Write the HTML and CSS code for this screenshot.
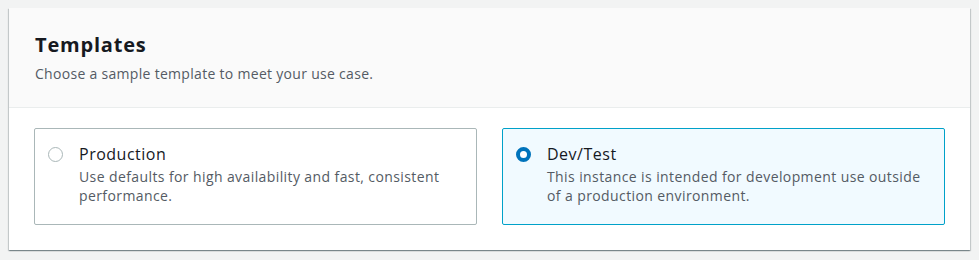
FILE: index.html
```html
<!DOCTYPE html>
<html>
<head>
    <title>Templates</title>
    <meta charset="UTF-8">
    <meta name="viewport" content="width=device-width, initial-scale=1.0">
    <link rel="stylesheet" href="styles.css">
</head>
<body>
    <div class="container">
        <div class="header">
            <h2>Templates</h2>
            <p class="desc">Choose a sample template to meet your use case.</p>
        </div>

        <div class="content">
            <div class="tiles">
                <label class="tile">
                    <input type="radio" name="template" value="production">
                    <span class="radio"></span>
                    <span class="tile-text">
                        <span class="tile-title">Production</span>
                        <span class="tile-desc">Use defaults for high availability and fast, consistent performance.</span>
                    </span>
                </label>

                <label class="tile">
                    <input type="radio" name="template" value="devtest" checked>
                    <span class="radio"></span>
                    <span class="tile-text">
                        <span class="tile-title">Dev/Test</span>
                        <span class="tile-desc">This instance is intended for development use outside of a production environment.</span>
                    </span>
                </label>
            </div>
        </div>
    </div>
</body>
</html>
```

FILE: styles.css
```css
* {
    box-sizing: border-box;
    margin: 0;
    padding: 0;
}

body {
    font-family: 'Open Sans', 'Noto Sans', sans-serif;
    background-color: #f2f3f3;
    color: #16191f;
    padding: 8px 9px;
}

.container {
    background: #fff;
    box-shadow: 0 1px 1px 0 rgba(0, 28, 36, 0.3),
                1px 1px 1px 0 rgba(0, 28, 36, 0.15),
                -1px 1px 1px 0 rgba(0, 28, 36, 0.15);
}

.header {
    background: #fafafa;
    border-bottom: 1px solid #eaeded;
    padding: 23px 26px 20px;
    height: 100px;
}

h2 {
    font-size: 20px;
    font-weight: 700;
    line-height: 28px;
    letter-spacing: 0.8px;
    color: #16191f;
}

.desc {
    font-size: 14px;
    line-height: 22px;
    letter-spacing: 0.3px;
    color: #545b64;
    margin-top: 4px;
}

.content {
    padding: 20px 25px 25px;
}

.tiles {
    display: grid;
    grid-template-columns: 1fr 1fr;
    gap: 25px;
}

.tile {
    display: flex;
    align-items: flex-start;
    gap: 16px;
    border: 1px solid #aab7b8;
    border-radius: 2px;
    padding: 13px 13px 19px;
    height: 97px;
    cursor: pointer;
}

.tile input {
    display: none;
}

.radio {
    flex: none;
    width: 15px;
    height: 15px;
    margin-top: 5px;
    border-radius: 50%;
    border: 1.5px solid #aab7b8;
    background: #fff;
}

.tile:has(input:checked) {
    border-color: #00a1c9;
    background: #f1faff;
}

.tile input:checked + .radio {
    border: 4px solid #0073bb;
}

.tile-text {
    display: flex;
    flex-direction: column;
}

.tile-title {
    font-size: 16px;
    line-height: 24px;
    letter-spacing: 0.5px;
    color: #16191f;
}

.tile-desc {
    font-size: 14px;
    line-height: 19px;
    letter-spacing: 0.4px;
    color: #545b64;
    margin-top: 1px;
    max-width: 385px;
}
```
